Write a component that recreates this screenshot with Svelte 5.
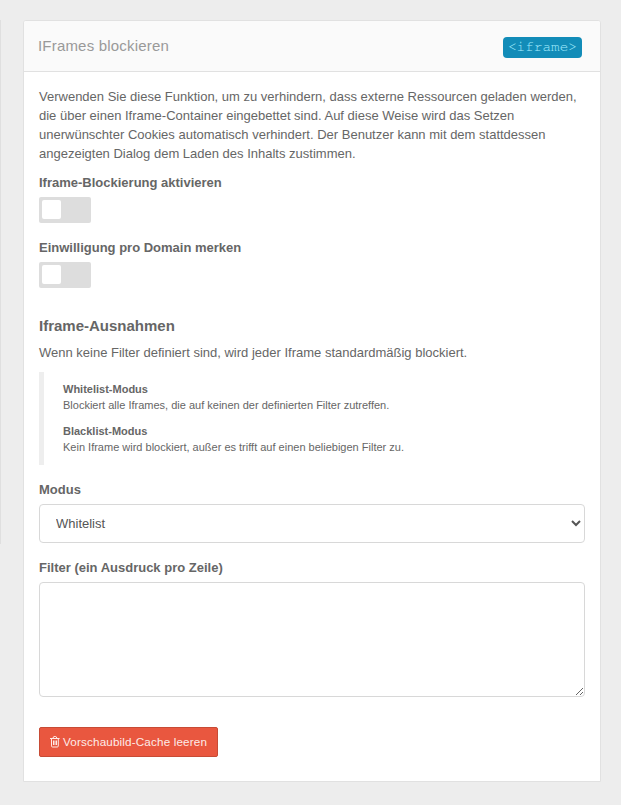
<script>
  let blocking = $state(false);
  let remember = $state(false);
  let mode = $state('whitelist');
  let filters = $state('');
</script>

<div class="page">
  <div class="neighbour"></div>
  <section class="panel">
    <header>
      <h1>IFrames blockieren</h1>
      <code>&lt;iframe&gt;</code>
    </header>
    <div class="body">
      <p class="intro">Verwenden Sie diese Funktion, um zu verhindern, dass externe Ressourcen geladen werden, die über einen Iframe-Container eingebettet sind. Auf diese Weise wird das Setzen unerwünschter Cookies automatisch verhindert. Der Benutzer kann mit dem stattdessen angezeigten Dialog dem Laden des Inhalts zustimmen.</p>

      <div class="field">
        <span class="label">Iframe-Blockierung aktivieren</span>
        <button class="switch" class:on={blocking} role="switch" aria-checked={blocking} aria-label="Iframe-Blockierung aktivieren" onclick={() => (blocking = !blocking)}><i></i></button>
      </div>
      <div class="field">
        <span class="label">Einwilligung pro Domain merken</span>
        <button class="switch" class:on={remember} role="switch" aria-checked={remember} aria-label="Einwilligung pro Domain merken" onclick={() => (remember = !remember)}><i></i></button>
      </div>

      <h2>Iframe-Ausnahmen</h2>
      <p class="hint">Wenn keine Filter definiert sind, wird jeder Iframe standardmäßig blockiert.</p>
      <blockquote>
        <p><strong>Whitelist-Modus</strong><br />Blockiert alle Iframes, die auf keinen der definierten Filter zutreffen.</p>
        <p><strong>Blacklist-Modus</strong><br />Kein Iframe wird blockiert, außer es trifft auf einen beliebigen Filter zu.</p>
      </blockquote>

      <label class="label" for="mode">Modus</label>
      <select id="mode" bind:value={mode}>
        <option value="whitelist">Whitelist</option>
        <option value="blacklist">Blacklist</option>
      </select>

      <label class="label filter" for="filters">Filter (ein Ausdruck pro Zeile)</label>
      <textarea id="filters" bind:value={filters}></textarea>

      <button class="danger">
        <svg width="10" height="12" viewBox="0 0 10 12" fill="none" stroke="currentColor" stroke-width="1">
          <path d="M0 2.5h9.6M2.9 2.5l.6-1.6q.2-.4.6-.4h1.6q.4 0 .6.4l.6 1.6M1.5 2.5v7.4q0 1.1 1 1.1h4.8q1 0 1-1.1V2.5M3.5 4.5v4.5M5 4.5v4.5M6.5 4.5v4.5" />
        </svg>
        <span>Vorschaubild-Cache leeren</span>
      </button>
    </div>
  </section>
</div>

<style>
  :global(body) {
    background: #ededed;
  }
  .page {
    box-sizing: border-box;
    height: 805px;
    padding-top: 20px;
    display: flex;
    align-items: flex-start;
    overflow: hidden;
    font: 13px/19px 'Liberation Sans', Arial, sans-serif;
    color: #666;
  }
  .neighbour {
    box-sizing: border-box;
    width: 1px;
    height: 524px;
    margin-right: 22px;
    background: #dfdfdf;
  }
  .panel {
    box-sizing: border-box;
    width: 578px;
    height: 762px;
    background: #fff;
    border: 1px solid #e1e1e1;
    border-radius: 3px 3px 0 0;
  }
  header {
    box-sizing: border-box;
    height: 51px;
    padding: 0 18px 0 14px;
    display: flex;
    align-items: center;
    justify-content: space-between;
    background: #fafafa;
    border-bottom: 1px solid #e1e1e1;
    border-radius: 2px 2px 0 0;
  }
  h1 {
    margin: 0 0 2px;
    font-size: 15px;
    letter-spacing: 0.19px;
    font-weight: 400;
    color: #999;
  }
  code {
    box-sizing: border-box;
    height: 21px;
    margin-top: 2px;
    padding: 0 5px;
    border-radius: 4px;
    background: #128cb8;
    color: #a4ecff;
    font: 14.4px/19px 'Courier 10 Pitch', 'FreeMono', 'Nimbus Mono PS', 'Liberation Mono', monospace;
  }
  .body {
    padding: 15px 15px 0;
  }
  p {
    margin: 0;
  }
  .intro {
    margin-bottom: 10px;
  }
  .label {
    display: block;
    font-weight: 700;
  }
  .field {
    height: 65px;
  }
  .switch {
    display: flex;
    align-items: flex-start;
    box-sizing: border-box;
    width: 52px;
    height: 26px;
    margin-top: 5px;
    padding: 3px;
    border: 0;
    border-radius: 2px;
    background: #ddd;
  }
  .switch i {
    display: block;
    width: 19px;
    height: 19px;
    border-radius: 2px;
    background: #fff;
  }
  .switch.on {
    background: #128cb8;
  }
  .switch.on i {
    margin-left: auto;
  }
  h2 {
    margin: 13px 0 8px;
    font-size: 15px;
    line-height: 19px;
    font-weight: 700;
  }
  blockquote {
    box-sizing: border-box;
    height: 93px;
    margin: 10px 0 15px;
    padding: 9px 19px;
    border-left: 5px solid #eee;
    font-size: 11px;
    line-height: 16px;
  }
  blockquote p + p {
    margin-top: 10px;
  }
  select {
    display: block;
    box-sizing: border-box;
    width: 546px;
    height: 39px;
    margin: 5px 0 15px;
    padding: 0 0 0 12px;
    border: 1px solid #d8d8d8;
    border-radius: 4px;
    background: #fff;
    color: #555;
    font: inherit;
  }
  textarea {
    display: block;
    box-sizing: border-box;
    width: 546px;
    height: 115px;
    margin: 5px 0 30px;
    padding: 8px 12px;
    border: 1px solid #d8d8d8;
    border-radius: 4px;
    background: #fff;
    color: #555;
    font: inherit;
  }
  .danger {
    box-sizing: border-box;
    width: 179px;
    height: 30px;
    padding: 0 0 0 10px;
    display: flex;
    align-items: center;
    gap: 3px;
    border: 1px solid #c74b35;
    border-radius: 2px;
    background: #e9573f;
    color: #fdebe8;
    font: 11.7px/16px 'Liberation Sans', Arial, sans-serif;
    letter-spacing: 0.15px;
    white-space: nowrap;
  }
</style>
